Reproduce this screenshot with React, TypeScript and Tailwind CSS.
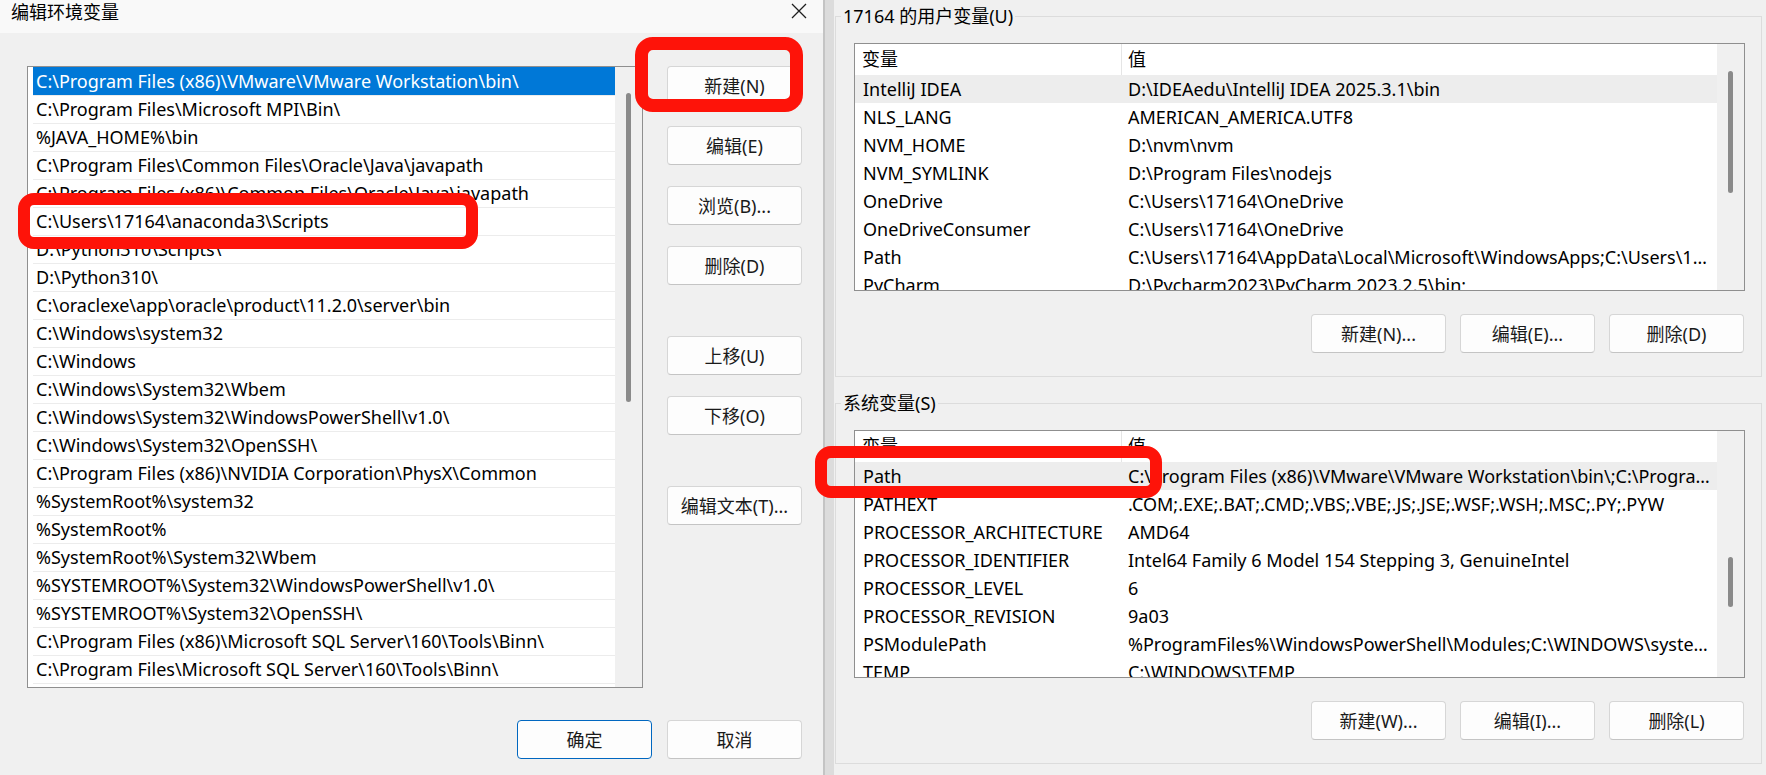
import React from 'react';
import clsx from 'clsx';

const pathEntries = [
  'C:\\Program Files (x86)\\VMware\\VMware Workstation\\bin\\',
  'C:\\Program Files\\Microsoft MPI\\Bin\\',
  '%JAVA_HOME%\\bin',
  'C:\\Program Files\\Common Files\\Oracle\\Java\\javapath',
  'C:\\Program Files (x86)\\Common Files\\Oracle\\Java\\javapath',
  'C:\\Users\\17164\\anaconda3\\Scripts',
  'D:\\Python310\\Scripts\\',
  'D:\\Python310\\',
  'C:\\oraclexe\\app\\oracle\\product\\11.2.0\\server\\bin',
  'C:\\Windows\\system32',
  'C:\\Windows',
  'C:\\Windows\\System32\\Wbem',
  'C:\\Windows\\System32\\WindowsPowerShell\\v1.0\\',
  'C:\\Windows\\System32\\OpenSSH\\',
  'C:\\Program Files (x86)\\NVIDIA Corporation\\PhysX\\Common',
  '%SystemRoot%\\system32',
  '%SystemRoot%',
  '%SystemRoot%\\System32\\Wbem',
  '%SYSTEMROOT%\\System32\\WindowsPowerShell\\v1.0\\',
  '%SYSTEMROOT%\\System32\\OpenSSH\\',
  'C:\\Program Files (x86)\\Microsoft SQL Server\\160\\Tools\\Binn\\',
  'C:\\Program Files\\Microsoft SQL Server\\160\\Tools\\Binn\\',
  'C:\\Program Files\\Microsoft SQL Server\\160\\DTS\\Binn\\',
];

const userVars: [string, string][] = [
  ['IntelliJ IDEA', 'D:\\IDEAedu\\IntelliJ IDEA 2025.3.1\\bin'],
  ['NLS_LANG', 'AMERICAN_AMERICA.UTF8'],
  ['NVM_HOME', 'D:\\nvm\\nvm'],
  ['NVM_SYMLINK', 'D:\\Program Files\\nodejs'],
  ['OneDrive', 'C:\\Users\\17164\\OneDrive'],
  ['OneDriveConsumer', 'C:\\Users\\17164\\OneDrive'],
  ['Path', 'C:\\Users\\17164\\AppData\\Local\\Microsoft\\WindowsApps;C:\\Users\\17164\\AppData\\Local\\Programs'],
  ['PyCharm', 'D:\\Pycharm2023\\PyCharm 2023.2.5\\bin;'],
];

const systemVars: [string, string][] = [
  ['Path', 'C:\\Program Files (x86)\\VMware\\VMware Workstation\\bin\\;C:\\Program Files\\Microsoft MPI\\Bin\\'],
  ['PATHEXT', '.COM;.EXE;.BAT;.CMD;.VBS;.VBE;.JS;.JSE;.WSF;.WSH;.MSC;.PY;.PYW'],
  ['PROCESSOR_ARCHITECTURE', 'AMD64'],
  ['PROCESSOR_IDENTIFIER', 'Intel64 Family 6 Model 154 Stepping 3, GenuineIntel'],
  ['PROCESSOR_LEVEL', '6'],
  ['PROCESSOR_REVISION', '9a03'],
  ['PSModulePath', '%ProgramFiles%\\WindowsPowerShell\\Modules;C:\\WINDOWS\\system32\\WindowsPowerShell\\v1.0\\Modules'],
  ['TEMP', 'C:\\WINDOWS\\TEMP'],
];

function Btn({ label, primary, className }: { label: string; primary?: boolean; className?: string }) {
  return (
    <button
      className={clsx(
        'h-[39px] w-[135px] shrink-0 rounded-[4px] border bg-[#fdfdfd] text-[18px] leading-none text-[#1a1a1a]',
        primary ? 'border-[#0067c0]' : 'border-[#d6d6d6] border-b-[#c4c4c4]',
        className,
      )}
    >
      {label}
    </button>
  );
}

function VarList({ rows, thumb }: { rows: [string, string][]; thumb: 'user' | 'system' }) {
  return (
    <div className="flex h-[248px] w-full min-w-0 border border-[#8f8f8f] bg-white overflow-hidden">
      <div className="flex-1 min-w-0">
        {/* Column header */}
        <div className="flex h-[31px] items-center">
          <div className="w-[267px] h-full flex items-center pl-[7px] border-r border-[#e5e5e5]">变量</div>
          <div className="flex-1 pl-[6px]">值</div>
        </div>
        {rows.map(([name, value], idx) => (
          <div key={name} className={clsx('flex h-[28px] items-center', idx === 0 && 'bg-[#ededed]')}>
            <div className="w-[268px] shrink-0 pl-[8px] whitespace-nowrap overflow-hidden">{name}</div>
            <div className="flex-1 min-w-0 pl-[5px] pr-[4px] whitespace-nowrap overflow-hidden text-ellipsis">{value}</div>
          </div>
        ))}
      </div>
      <div className={clsx('w-[27px] shrink-0 bg-[#f0f0f0]', thumb === 'user' ? 'pt-[27px]' : 'pt-[126px]')}>
        <div
          className={clsx(
            'ml-[11px] w-[5px] rounded-full bg-[#8a8a8a]',
            thumb === 'user' ? 'h-[122px]' : 'h-[50px]',
          )}
        />
      </div>
    </div>
  );
}

function GroupBox({ title, rows, thumb, buttons, className }: {
  title: string;
  rows: [string, string][];
  thumb: 'user' | 'system';
  buttons: string[];
  className?: string;
}) {
  return (
    <div className={clsx('relative h-[361px] w-full min-w-0 border border-[#dcdcdc] pl-[18px] pr-[16px] pt-[26px]', className)}>
      <span className="absolute -top-[13px] left-[5px] bg-[#f0f0f0] px-[2px] leading-[24px]">{title}</span>
      <VarList rows={rows} thumb={thumb} />
      <div className="mt-[23px] flex justify-end gap-[14px] pr-[1px]">
        {buttons.map((b) => (
          <Btn key={b} label={b} />
        ))}
      </div>
    </div>
  );
}

export default function App() {
  return (
    <div className="relative flex h-[775px] w-[1766px] overflow-hidden bg-[#f0f0f0] text-[18px] text-black font-['Noto_Sans','Noto_Sans_CJK_SC',sans-serif]">
      {/* Edit environment variable dialog */}
      <div className="flex w-[823px] shrink-0 flex-col bg-[#f0f0f0]">
        <div className="flex h-[33px] items-start justify-between bg-[#f9f9f9] pl-[11px] pr-[16px]">
          <span className="leading-[24px]">编辑环境变量</span>
          <svg width="16" height="16" viewBox="0 0 16 16" className="mt-[3px]">
            <path d="M1 1 L15 15 M15 1 L1 15" stroke="#1f1f1f" strokeWidth="1.3" fill="none" />
          </svg>
        </div>
        <div className="flex pl-[27px] pt-[33px]">
          <div className="flex h-[622px] w-[616px] border border-[#8f8f8f] bg-white overflow-hidden">
            <div className="w-[587px] pl-[5px] overflow-hidden">
              {pathEntries.map((p, idx) => (
                <div
                  key={idx}
                  className={clsx(
                    'flex h-[28px] items-center pl-[3px] whitespace-nowrap',
                    idx === 0 ? 'bg-[#0078d7] text-white' : 'border-t border-[#ececec]',
                  )}
                >
                  {p}
                </div>
              ))}
            </div>
            <div className="w-[27px] shrink-0 bg-[#f0f0f0] pt-[26px]">
              <div className="ml-[11px] h-[309px] w-[5px] rounded-full bg-[#8a8a8a]" />
            </div>
          </div>
          <div className="ml-[24px] flex flex-col">
            <Btn label="新建(N)" />
            <Btn label="编辑(E)" className="mt-[21px]" />
            <Btn label="浏览(B)..." className="mt-[21px]" />
            <Btn label="删除(D)" className="mt-[21px]" />
            <Btn label="上移(U)" className="mt-[51px]" />
            <Btn label="下移(O)" className="mt-[21px]" />
            <Btn label="编辑文本(T)..." className="mt-[51px]" />
          </div>
        </div>
        <div className="mt-[32px] flex justify-end gap-[15px] pr-[21px]">
          <Btn label="确定" primary />
          <Btn label="取消" />
        </div>
      </div>

      {/* Shadow between windows */}
      <div className="w-[2px] shrink-0 bg-[#c4c4c4]" />
      <div className="w-[9px] shrink-0 bg-[#dcdcdc]" />

      {/* Environment variables window */}
      <div className="flex min-w-0 flex-1 flex-col pl-[1px] pr-[4px] pt-[16px]">
        <GroupBox
          title="17164 的用户变量(U)"
          rows={userVars}
          thumb="user"
          buttons={['新建(N)...', '编辑(E)...', '删除(D)']}
        />
        <GroupBox
          title="系统变量(S)"
          rows={systemVars}
          thumb="system"
          buttons={['新建(W)...', '编辑(I)...', '删除(L)']}
          className="mt-[26px]"
        />
      </div>

      {/* Red annotation boxes */}
      <div className="absolute left-[635px] top-[37px] h-[75px] w-[168px] rounded-[18px] border-[13px] border-[#fe1309]" />
      <div className="absolute left-[18px] top-[193px] h-[56px] w-[460px] rounded-[16px] border-[12px] border-[#fe1309]" />
      <div className="absolute left-[815px] top-[446px] h-[52px] w-[347px] rounded-[16px] border-[12px] border-[#fe1309]" />
    </div>
  );
}
